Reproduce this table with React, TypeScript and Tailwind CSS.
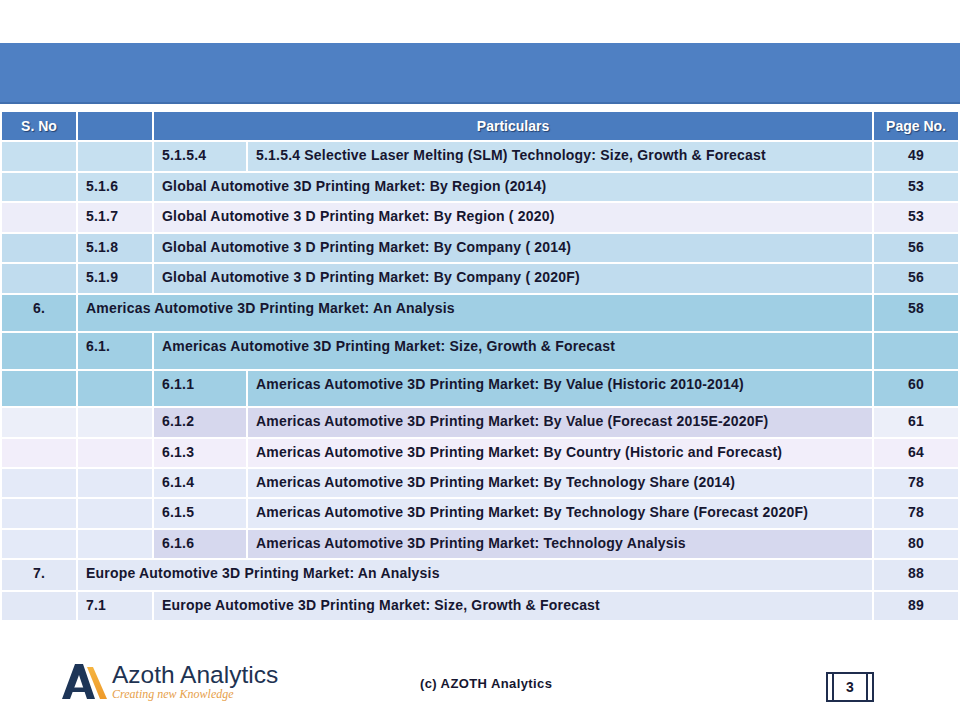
import React from 'react';

type Row = {
  kind: 'l1' | 'l2' | 'l3';
  num: string;
  text: string;
  page: string;
  h: string;
  bg: string;
  mid?: string;
};

const rows: Row[] = [
  { kind: 'l3', num: '5.1.5.4', text: '5.1.5.4 Selective Laser Melting (SLM) Technology: Size, Growth & Forecast', page: '49', h: 'h-[29px]', bg: 'bg-[#c6e0f0]' },
  { kind: 'l2', num: '5.1.6', text: 'Global Automotive 3D Printing Market: By Region (2014)', page: '53', h: 'h-[28px]', bg: 'bg-[#c6e0f0]' },
  { kind: 'l2', num: '5.1.7', text: 'Global Automotive 3 D Printing Market: By Region ( 2020)', page: '53', h: 'h-[29px]', bg: 'bg-[#ededf9]' },
  { kind: 'l2', num: '5.1.8', text: 'Global Automotive 3 D Printing Market: By Company ( 2014)', page: '56', h: 'h-[28px]', bg: 'bg-[#c0dcee]' },
  { kind: 'l2', num: '5.1.9', text: 'Global Automotive 3 D Printing Market: By Company ( 2020F)', page: '56', h: 'h-[29px]', bg: 'bg-[#c0dcee]' },
  { kind: 'l1', num: '6.', text: 'Americas Automotive 3D Printing Market: An Analysis', page: '58', h: 'h-[36px]', bg: 'bg-[#a0cfe4]' },
  { kind: 'l2', num: '6.1.', text: 'Americas Automotive 3D Printing Market: Size, Growth & Forecast', page: '', h: 'h-[36px]', bg: 'bg-[#a0cfe4]' },
  { kind: 'l3', num: '6.1.1', text: 'Americas Automotive 3D Printing Market: By Value (Historic 2010-2014)', page: '60', h: 'h-[35px]', bg: 'bg-[#a0cfe4]' },
  { kind: 'l3', num: '6.1.2', text: 'Americas Automotive 3D Printing Market: By Value (Forecast 2015E-2020F)', page: '61', h: 'h-[29px]', bg: 'bg-[#eceff9]', mid: 'bg-[#d6d7ed]' },
  { kind: 'l3', num: '6.1.3', text: 'Americas Automotive 3D Printing Market: By Country (Historic and Forecast)', page: '64', h: 'h-[28px]', bg: 'bg-[#f2eefa]' },
  { kind: 'l3', num: '6.1.4', text: 'Americas Automotive 3D Printing Market: By Technology Share (2014)', page: '78', h: 'h-[28px]', bg: 'bg-[#e4eaf8]' },
  { kind: 'l3', num: '6.1.5', text: 'Americas Automotive 3D Printing Market: By Technology Share (Forecast 2020F)', page: '78', h: 'h-[29px]', bg: 'bg-[#e4eaf8]' },
  { kind: 'l3', num: '6.1.6', text: 'Americas Automotive 3D Printing Market: Technology Analysis', page: '80', h: 'h-[28px]', bg: 'bg-[#e4eaf8]', mid: 'bg-[#d6d8ee]' },
  { kind: 'l1', num: '7.', text: 'Europe Automotive 3D Printing Market: An Analysis', page: '88', h: 'h-[30px]', bg: 'bg-[#e2e8f6]' },
  { kind: 'l2', num: '7.1', text: 'Europe Automotive 3D Printing Market: Size, Growth & Forecast', page: '89', h: 'h-[28px]', bg: 'bg-[#e2e8f6]' },
];

const cell = 'pt-[5px] text-[14px] font-bold tracking-[0.2px] text-[#161630] leading-[17px] whitespace-nowrap';
const head = 'h-[28px] bg-[#4a7cbf] flex items-center justify-center text-[14px] font-bold text-white [text-shadow:1px_1px_1px_#23406e]';

const TocRow: React.FC<{ row: Row }> = ({ row }) => {
  const mid = row.mid ?? row.bg;
  return (
    <>
      {row.kind === 'l1' ? (
        <>
          <div className={`${row.h} ${row.bg} ${cell} text-center`}>{row.num}</div>
          <div className={`${row.h} ${row.bg} ${cell} col-span-3 pl-2`}>{row.text}</div>
        </>
      ) : row.kind === 'l2' ? (
        <>
          <div className={`${row.h} ${row.bg}`} />
          <div className={`${row.h} ${row.bg} ${cell} pl-2`}>{row.num}</div>
          <div className={`${row.h} ${mid} ${cell} col-span-2 pl-2`}>{row.text}</div>
        </>
      ) : (
        <>
          <div className={`${row.h} ${row.bg}`} />
          <div className={`${row.h} ${row.bg}`} />
          <div className={`${row.h} ${mid} ${cell} pl-2`}>{row.num}</div>
          <div className={`${row.h} ${mid} ${cell} pl-2`}>{row.text}</div>
        </>
      )}
      <div className={`${row.h} ${row.bg} ${cell} text-center`}>{row.page}</div>
    </>
  );
};

const Logo = () => (
  <div className="w-[218px] flex items-start">
    <svg width="46" height="36" viewBox="0 0 46 36" className="mt-[1px] shrink-0">
      <defs>
        <linearGradient id="org" x1="0" y1="0" x2="0" y2="1">
          <stop offset="0" stopColor="#f5b440" />
          <stop offset="1" stopColor="#ee9a2a" />
        </linearGradient>
      </defs>
      <polygon points="25,4 31,4 45,36 38,36" fill="url(#org)" />
      <polygon points="0,36 13,1 21,1 33,36 25,36 17,12 8,36" fill="#1d3557" />
      <polygon points="8,29 26,29 24.5,24.5 9.5,24.5" fill="#1d3557" />
    </svg>
    <div className="ml-[4px] flex flex-col">
      <span className="text-[24.5px] leading-[25px] text-[#1e3352] whitespace-nowrap" style={{ fontFamily: '"Liberation Sans", Arial, sans-serif' }}>
        Azoth Analytics
      </span>
      <span className="text-[12px] leading-[13px] italic text-[#e6a04a] mt-[1px] whitespace-nowrap" style={{ fontFamily: '"Liberation Serif", serif' }}>
        Creating new Knowledge
      </span>
    </div>
  </div>
);

export default function App() {
  return (
    <div className="w-[960px] h-[720px] bg-white overflow-hidden" style={{ fontFamily: '"Liberation Sans", Arial, sans-serif' }}>
      <div className="h-[43px]" />
      <div className="h-[61px] bg-[#4f80c3] border-b-2 border-[#416fae]" />
      <div className="mt-[8px] px-[2px] grid grid-cols-[74px_74px_92px_1fr_84px] gap-[2px]">
        <div className={head}>S. No</div>
        <div className="h-[28px] bg-[#4a7cbf]" />
        <div className={`${head} col-span-2`}>Particulars</div>
        <div className={head}>Page No.</div>
        {rows.map((r, i) => (
          <TocRow key={i} row={r} />
        ))}
      </div>
      <div className="mt-[42px] flex items-start pl-[62px]">
        <Logo />
        <div className="ml-[140px] mt-[14px] w-[137px] text-[13px] leading-[15px] font-bold tracking-[0.4px] text-[#161630] whitespace-nowrap">
          (c) AZOTH Analytics
        </div>
        <div className="ml-[269px] mt-[10px] w-[48px] h-[30px] border-2 border-[#1f2d4d] flex">
          <div className="w-[6px] h-full border-r-2 border-[#1f2d4d]" />
          <div className="flex-1 flex items-center justify-center text-[14px] font-bold text-[#161630]">3</div>
          <div className="w-[6px] h-full border-l-2 border-[#1f2d4d]" />
        </div>
      </div>
    </div>
  );
}
